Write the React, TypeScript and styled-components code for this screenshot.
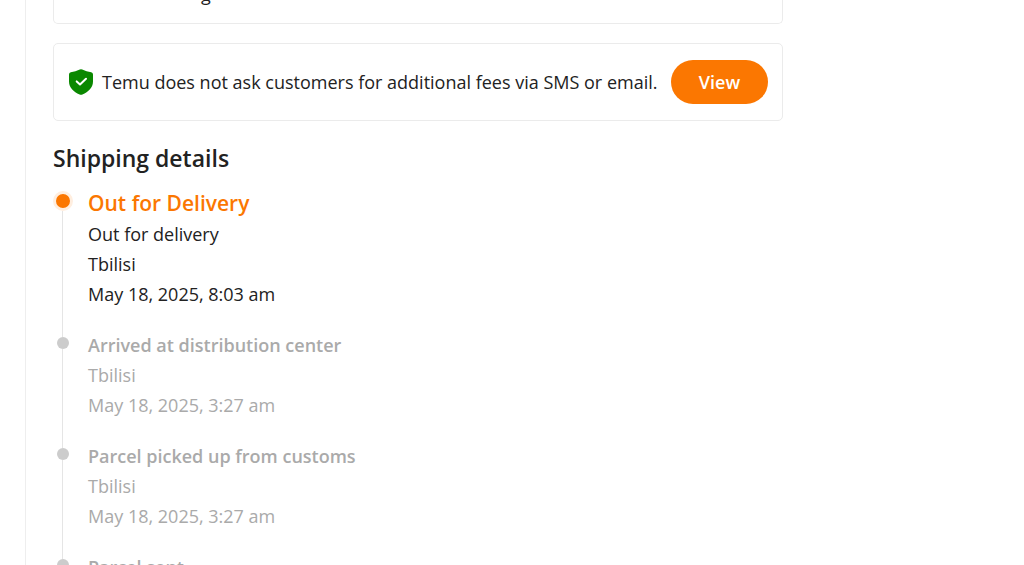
import React from "react";
import styled, { createGlobalStyle } from "styled-components";

const GlobalStyle = createGlobalStyle`
  * { box-sizing: border-box; }
  body {
    margin: 0;
    background: #fff;
    color: #222;
    font-family: "Segoe UI", "Open Sans", "Noto Sans", sans-serif;
  }
`;

const Page = styled.div`
  height: 100vh;
  padding-left: 25px;
  overflow: hidden;
`;

const Content = styled.main`
  min-height: 100%;
  padding-left: 27px;
  border-left: 1px solid #eee;
`;

const Card = styled.section`
  display: flex;
  align-items: center;
  width: 100%;
  max-width: 730px;
  padding: 16px 14px 16px 15px;
  border: 1px solid #ebebeb;
  border-radius: 5px;
`;

const ScrolledCard = styled(Card)`
  align-items: flex-end;
  height: 24px;
  padding: 0 0 14px 147px;
  border-top: 0;
  border-top-left-radius: 0;
  border-top-right-radius: 0;
  overflow: hidden;
`;

const Text = styled.p`
  margin: 0;
  font-size: 18px;
  line-height: 30px;
`;

const NoticeCard = styled(Card)`
  margin-top: 19px;
`;

const Shield = styled.svg`
  flex: none;
  width: 24px;
  height: 26px;
  margin: 0 9px 0 0;
`;

const NoticeText = styled(Text)`
  flex: 1;
`;

const ViewButton = styled.button`
  flex: none;
  width: 97px;
  height: 44px;
  padding: 0;
  border: 0;
  border-radius: 22px;
  background: #fb7701;
  color: #fff;
  font-family: inherit;
  font-size: 18px;
  font-weight: 600;
  line-height: 30px;
  cursor: pointer;
`;

const Heading = styled.h2`
  margin: 21px 0 14px;
  font-size: 23px;
  font-weight: 600;
  line-height: 32px;
`;

const Timeline = styled.ol`
  margin: 0;
  padding: 0;
  list-style: none;
`;

const Event = styled.li<{ $active?: boolean }>`
  display: flex;
  gap: 15px;
  color: ${(p) => (p.$active ? "#222" : "#aaa")};
`;

const Rail = styled.div`
  display: flex;
  flex-direction: column;
  align-items: center;
  width: 20px;
`;

const Track = styled.span`
  flex: 1;
  width: 1px;
  margin-right: 1px;
  background: #e5e5e5;
`;

const Lead = styled(Track)<{ $active?: boolean }>`
  flex: none;
  height: ${(p) => (p.$active ? 3 : 7)}px;
  background: ${(p) => (p.$active ? "transparent" : "#e5e5e5")};
`;

const Dot = styled.span<{ $active?: boolean }>`
  width: ${(p) => (p.$active ? 20 : 12)}px;
  height: ${(p) => (p.$active ? 20 : 12)}px;
  border: ${(p) => (p.$active ? "3px solid #ffeedf" : "0")};
  border-radius: 50%;
  background: ${(p) => (p.$active ? "#fb7701" : "#ccc")};
`;

const Details = styled.div`
  padding-bottom: 21px;
`;

const Title = styled.h3<{ $active?: boolean }>`
  margin: 0;
  color: ${(p) => (p.$active ? "#fb7701" : "inherit")};
  font-size: ${(p) => (p.$active ? 21 : 18)}px;
  font-weight: 600;
  line-height: ${(p) => (p.$active ? 31 : 30)}px;
`;

const events = [
  { title: "Out for Delivery", lines: ["Out for delivery", "Tbilisi", "May 18, 2025, 8:03 am"], active: true },
  { title: "Arrived at distribution center", lines: ["Tbilisi", "May 18, 2025, 3:27 am"] },
  { title: "Parcel picked up from customs", lines: ["Tbilisi", "May 18, 2025, 3:27 am"] },
  { title: "Parcel sent", lines: [] },
];

export default function App() {
  return (
    <>
      <GlobalStyle />
      <Page>
        <Content>
          <ScrolledCard>
            <Text>g</Text>
          </ScrolledCard>
          <NoticeCard>
            <Shield viewBox="0 0 24 26" aria-hidden="true">
              <path
                d="M10.8.5Q12 0 13.2.5Q17.5 2.7 22.2 3.3Q24 3.6 24 5.4V12.5C24 18.5 19.5 22.8 13.4 25.5Q12 26.1 10.6 25.5C4.5 22.8 0 18.5 0 12.5V5.4Q0 3.6 1.8 3.3Q6.5 2.7 10.8.5Z"
                fill="#0a8800"
              />
              <path
                d="M7.7 12.4L11 15.5L17 9.8"
                fill="none"
                stroke="#fff"
                strokeWidth="2"
                strokeLinecap="round"
                strokeLinejoin="round"
              />
            </Shield>
            <NoticeText>Temu does not ask customers for additional fees via SMS or email.</NoticeText>
            <ViewButton type="button">View</ViewButton>
          </NoticeCard>
          <Heading>Shipping details</Heading>
          <Timeline>
            {events.map((e) => (
              <Event key={e.title} $active={e.active}>
                <Rail>
                  <Lead $active={e.active} />
                  <Dot $active={e.active} />
                  <Track />
                </Rail>
                <Details>
                  <Title $active={e.active}>{e.title}</Title>
                  {e.lines.map((l) => (
                    <Text key={l}>{l}</Text>
                  ))}
                </Details>
              </Event>
            ))}
          </Timeline>
        </Content>
      </Page>
    </>
  );
}
